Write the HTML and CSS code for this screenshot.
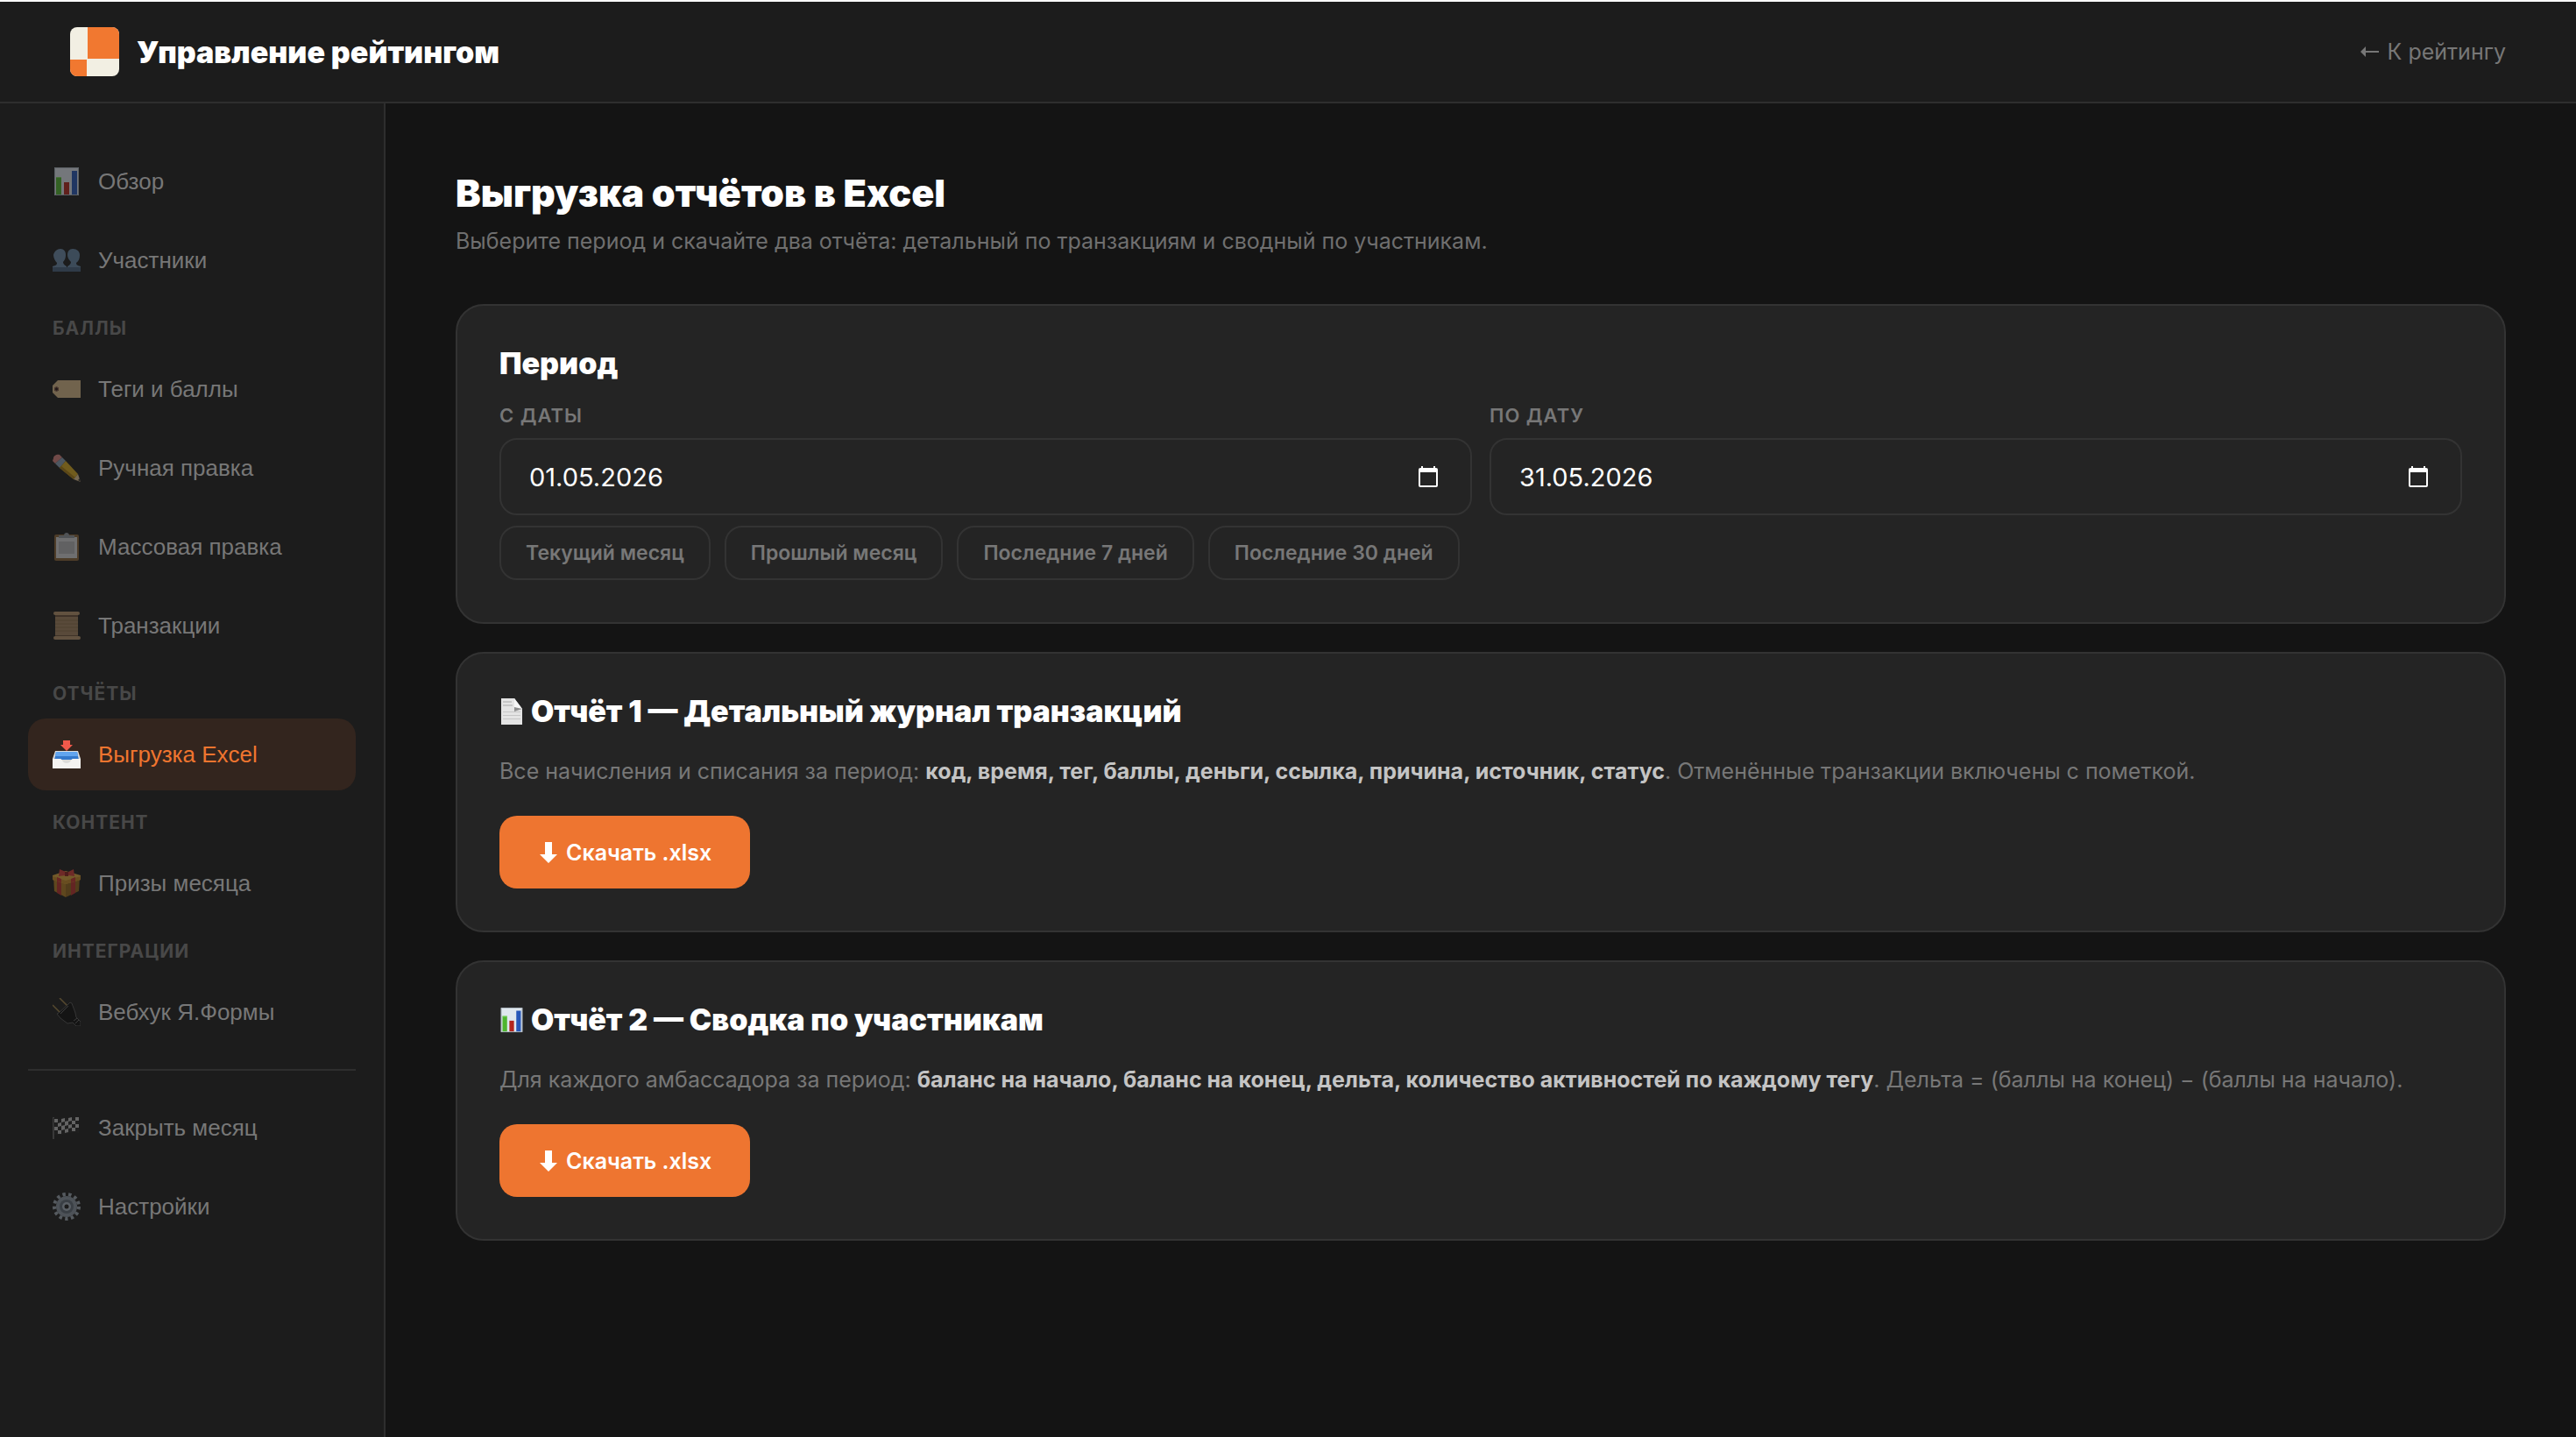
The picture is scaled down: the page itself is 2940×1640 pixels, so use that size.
FILE: index.html
```html
<!DOCTYPE html>
<html lang="ru">
<head>
<meta charset="utf-8">
<meta name="viewport" content="width=device-width, initial-scale=1">
<title>Управление рейтингом</title>
<link rel="stylesheet" href="styles.css">
</head>
<body>
<svg class="sprite" aria-hidden="true">
  <symbol id="i-chart" viewBox="0 0 32 32">
    <path fill="#dfe7ee" d="M2 0h28v32H2z"/>
    <path fill="none" stroke="#a9b4bd" d="M2.500.5h27v31h-27z"/>
    <path fill="#4fb52f" d="M4 11h6v20H4z"/>
    <path fill="#b3251d" d="M13 17h6v14h-6z"/>
    <path fill="#2757b8" d="M22 4h6v27h-6z"/>
    <path fill="#7ed860" d="M4 11h6v1H4z"/>
  </symbol>
  <symbol id="i-down" viewBox="0 0 20 24">
    <path fill="currentColor" d="M6 0h8v14h6L10 24 0 14h6z"/>
  </symbol>
  <symbol id="i-calendar" viewBox="0 0 22 24">
    <path fill="currentColor" fill-rule="evenodd" d="M3 0h2v2h12V0h2v2h1a2 2 0 0 1 2 2v18a2 2 0 0 1-2 2H2a2 2 0 0 1-2-2V4a2 2 0 0 1 2-2h1zM2 7v15h18V7z"/>
  </symbol>
</svg>

<header class="topbar">
  <div class="brand">
    <svg class="brand-logo" viewBox="0 0 56 56" aria-hidden="true">
      <clipPath id="logo-clip"><rect width="56" height="56" rx="8"/></clipPath>
      <g clip-path="url(#logo-clip)">
        <path fill="#f2efe3" d="M0 0h56v56H0z"/>
        <path fill="#f17830" d="M20 0h36v36H20zM0 37h19v19H0z"/>
      </g>
    </svg>
    <span class="brand-name">Управление рейтингом</span>
  </div>
  <a class="back-link" href="#rating"><svg class="back-arrow" viewBox="0 0 21 14" aria-hidden="true"><path fill="currentColor" d="M0 7l6-6v5h15v2H6v5z"/></svg>К рейтингу</a>
</header>

<div class="layout">
  <nav class="sidebar" aria-label="Разделы">
    <a class="nav-item" href="#overview"><svg class="nav-icon"><use href="#i-chart"/></svg>Обзор</a>
    <a class="nav-item" href="#members"><svg class="nav-icon" viewBox="0 0 32 32"><path fill="#6b8aa8" d="M9 3c4 0 6 3 6 7 0 3-1 6-3 8 0 2 1 3 4 5v5H0v-5c4-1 5-2 5-4-2-2-4-6-4-9 1-4 4-7 8-7z"/><path fill="#6485a4" d="M23 3c5 0 8 3 8 7s-1 7-4 9c0 2 1 3 5 4v5H17v-5c3-2 4-3 4-5-2-2-4-5-4-8 0-4 2-7 6-7z"/><path fill="#48627e" d="M0 24h32v5H0z"/></svg>Участники</a>

    <p class="nav-label">Баллы</p>
    <a class="nav-item" href="#tags"><svg class="nav-icon" viewBox="0 0 32 32"><path fill="#d9b98a" d="M6 6h26v20H6l-6-6v-8z"/><circle cx="4.500" cy="16" r="2.500" fill="#271713"/><circle cx="4.500" cy="16" r="2" fill="none" stroke="#8b5a4a"/></svg>Теги и баллы</a>
    <a class="nav-item" href="#manual"><svg class="nav-icon" viewBox="0 0 32 32"><path fill="#d9837f" d="M1 5c0-3 4-5 7-4l3 3-8 7-3-3z"/><path fill="#8a9fb5" d="M3 11l8-7 4 4-7 8z"/><path fill="#d8aa1f" d="M8 16l7-8 14 15-5 6z"/><path fill="#a87c12" d="M8 16l2-2 16 13-2 2z"/><path fill="#e3c594" d="M24 29l5-6 3 9z"/><path fill="#333" d="M29 30l2-2 1 4z"/></svg>Ручная правка</a>
    <a class="nav-item" href="#bulk"><svg class="nav-icon" viewBox="0 0 32 32"><rect x="2" y="2" width="28" height="30" rx="2" fill="#8a6337"/><path fill="#d4d4d6" d="M4 5h24v24H4z"/><path fill="#b5b5b7" d="M7 10h18v14H7z"/><path fill="#8f969d" d="M7 3h6c0-4 6-4 6 0h6v3H7z"/></svg>Массовая правка</a>
    <a class="nav-item" href="#transactions"><svg class="nav-icon" viewBox="0 0 32 32"><path fill="#a3835f" d="M3 4h26v25H3z"/><path stroke="#8d6e4d" d="M3 10h26M3 14h26M3 18h26M3 22h26"/><rect x="1" y="0" width="30" height="4" rx="2" fill="#b8946c"/><path fill="#6a5037" d="M3 4h26v2H3z"/><rect x="1" y="28" width="31" height="4" rx="2" fill="#b8946c"/><path fill="#6a5037" d="M3 27h26v1H3z"/></svg>Транзакции</a>

    <p class="nav-label">Отчёты</p>
    <a class="nav-item nav-item-active" href="#export" aria-current="page"><svg class="nav-icon" viewBox="0 0 32 32"><path fill="#f0594b" d="M12 0h8v5h3l-7 7-7-7h3z"/><path fill="#dcdcda" d="M3 12h26l3 9v11H0V21z"/><path fill="#3579cc" d="M4 13h24l2 9H2z"/><path fill="#62a5ef" d="M4 13h24l1 5H3z"/><path fill="#f4f3f1" d="M0 21h9c2 0 2 5 7 5s5-5 7-5h9v11H0z"/></svg>Выгрузка Excel</a>

    <p class="nav-label">Контент</p>
    <a class="nav-item" href="#prizes"><svg class="nav-icon" viewBox="0 0 32 32"><path fill="#b27d22" d="M1 8l14 5v19L2 25z"/><path fill="#94661a" d="M15 13l16-5-1 17-15 7z"/><path fill="#b9302c" d="M5 10l5 2v18l-5-3zM21 12l5-2v17l-5 3z"/><path fill="#dda53c" d="M0 7l15-5 17 5v5l-17 5L0 12z"/><path fill="#c48a25" d="M0 8l15 5 17-5v4l-17 5L0 12z"/><path fill="#c8332f" d="M5 9l5 2v4l-5-1zM21 11l5-2v5l-5 1z"/><path fill="#d13b36" d="M7 8l1-8 7 3h3l6-3 1 8-7-1h-3z"/><path fill="#8e1f1c" d="M14 3h4v5h-4z"/></svg>Призы месяца</a>

    <p class="nav-label">Интеграции</p>
    <a class="nav-item" href="#webhook"><svg class="nav-icon" viewBox="0 0 32 32"><path stroke="#9c8047" stroke-width="1.500" d="M0 8l9 9M8 0l9 9"/><path fill="#0b0b0b" stroke="#555" d="M5 18l2-1L18 7l2-2 2 1 4 11 1 5 5 5v5h-5l-4-4-6 1-8-6z"/><path stroke="#666" d="M9 18l9-9M24 26l4-3M26 29l4-4"/></svg>Вебхук Я.Формы</a>

    <hr class="nav-divider">
    <a class="nav-item" href="#close"><svg class="nav-icon" viewBox="0 0 32 32"><path stroke="#777" stroke-width="1.500" d="M1 4v25"/><path fill="#242424" d="M1 5c10 3 18-3 29 0v17c-10-3-16 4-28 2z"/><path fill="#bdbdbd" d="M2 6h4v4H2zM10 6l4-1v4l-4 1zM18 5l4-1v4l-4 1zM26 4h4v4h-4zM6 11l4-1v4l-4 1zM14 9l4-1v5l-4 1zM22 8h4v4h-4zM2 15h4v4H2zM10 14l4-1v5l-4 1zM18 13l4-1v4l-4 1zM26 12h4v4h-4zM6 19h4v4H6zM14 18l4-1v4l-4 1zM22 16h4v4h-4z"/></svg>Закрыть месяц</a>
    <a class="nav-item" href="#settings"><svg class="nav-icon" viewBox="0 0 32 32"><circle cx="16" cy="16" r="14" fill="none" stroke="#9aa5b0" stroke-width="4" stroke-dasharray="3.400 3.367"/><circle cx="16" cy="16" r="12" fill="#8995a1"/><circle cx="16" cy="16" r="8" fill="#5f6b77"/><circle cx="16" cy="16" r="5" fill="#a8b4c0"/><circle cx="16" cy="16" r="2.500" fill="#1c1c1c"/></svg>Настройки</a>
  </nav>

  <main class="content">
    <h1 class="page-title">Выгрузка отчётов в Excel</h1>
    <p class="page-subtitle">Выберите период и скачайте два отчёта: детальный по транзакциям и сводный по участникам.</p>

    <div class="cards">
      <section class="card">
        <h2 class="card-title">Период</h2>
        <div class="date-grid">
          <div class="field">
            <label class="field-label" for="date-from">С даты</label>
            <div class="date-box">
              <input class="date-input" id="date-from" type="text" inputmode="numeric" value="01.05.2026">
              <button class="date-button" type="button" aria-label="Открыть календарь"><svg class="date-icon"><use href="#i-calendar"/></svg></button>
            </div>
          </div>
          <div class="field">
            <label class="field-label" for="date-to">По дату</label>
            <div class="date-box">
              <input class="date-input" id="date-to" type="text" inputmode="numeric" value="31.05.2026">
              <button class="date-button" type="button" aria-label="Открыть календарь"><svg class="date-icon"><use href="#i-calendar"/></svg></button>
            </div>
          </div>
        </div>
        <div class="chips">
          <button class="chip" type="button">Текущий месяц</button>
          <button class="chip" type="button">Прошлый месяц</button>
          <button class="chip" type="button">Последние 7 дней</button>
          <button class="chip" type="button">Последние 30 дней</button>
        </div>
      </section>

      <section class="card">
        <h2 class="card-title"><svg class="title-icon" viewBox="0 0 28 32" aria-hidden="true"><path fill="#e4e4e4" d="M2 1h15l9 12v18H2z"/><path fill="#c6c6c6" d="M4 4h10v2H4zM4 8h11v2H4zM4 16h20v1H4zM4 20h20v1H4zM4 24h20v1H4z"/><path fill="#8e8e8e" d="M17 1l9 12-9 3z"/><path fill="#f6f6f6" d="M17 1l9 12-9-2z"/></svg>Отчёт 1 — Детальный журнал транзакций</h2>
        <p class="card-text">Все начисления и списания за период: <strong class="card-strong">код, время, тег, баллы, деньги, ссылка, причина, источник, статус</strong>. Отменённые транзакции включены с пометкой.</p>
        <button class="download" type="button"><svg class="download-icon" aria-hidden="true"><use href="#i-down"/></svg>Скачать .xlsx</button>
      </section>

      <section class="card">
        <h2 class="card-title"><svg class="title-icon" aria-hidden="true"><use href="#i-chart"/></svg>Отчёт 2 — Сводка по участникам</h2>
        <p class="card-text">Для каждого амбассадора за период: <strong class="card-strong">баланс на начало, баланс на конец, дельта, количество активностей по каждому тегу</strong>. Дельта = (баллы на конец) − (баллы на начало).</p>
        <button class="download" type="button"><svg class="download-icon" aria-hidden="true"><use href="#i-down"/></svg>Скачать .xlsx</button>
      </section>
    </div>
  </main>
</div>
</body>
</html>
```
FILE: styles.css
```css
* {
  box-sizing: border-box;
}

body {
  margin: 0;
  min-height: 100vh;
  display: flex;
  flex-direction: column;
  border-top: 2px solid #fff;
  background: #141414;
  color: #fff;
  font-family: Inter, "Liberation Sans", sans-serif;
  font-size: 25px;
}

.sprite {
  position: absolute;
  width: 0;
  height: 0;
}

h1,
h2,
p {
  margin: 0;
}

button,
input {
  font: inherit;
  color: inherit;
}

/* Header */
.topbar {
  display: flex;
  align-items: center;
  justify-content: space-between;
  height: 116px;
  padding: 0 80px;
  background: #1c1c1c;
  border-bottom: 2px solid #2e2e2e;
}

.brand {
  display: flex;
  align-items: center;
  gap: 20px;
}

.brand-logo {
  width: 56px;
  height: 56px;
}

.brand-name {
  font-size: 34px;
  font-weight: 900;
}

.back-link {
  display: flex;
  align-items: center;
  gap: 10px;
  color: #777;
  text-decoration: none;
}

.back-arrow {
  width: 21px;
  height: 14px;
}

/* Layout */
.layout {
  flex: 1;
  display: flex;
}

.sidebar {
  flex: 0 0 440px;
  display: flex;
  flex-direction: column;
  gap: 8px;
  padding: 48px 32px;
  background: #1c1c1c;
  border-right: 2px solid #2e2e2e;
}

.nav-item {
  display: flex;
  align-items: center;
  gap: 20px;
  height: 82px;
  padding: 0 28px;
  border-radius: 20px;
  color: #777;
  font-family: "Liberation Sans", Arial, sans-serif;
  font-size: 26px;
  text-decoration: none;
}

.nav-icon {
  flex: none;
  width: 32px;
  height: 32px;
  opacity: 0.45;
}

.nav-item-active {
  background: #33251e;
  color: #f0752f;
}

.nav-item-active .nav-icon {
  opacity: 1;
}

.nav-label {
  padding: 16px 28px 8px;
  color: #484848;
  font-size: 21px;
  font-weight: 700;
  line-height: 25px;
  letter-spacing: 1px;
  text-transform: uppercase;
}

.nav-divider {
  width: 100%;
  height: 2px;
  margin: 16px 0;
  border: 0;
  background: #2e2e2e;
}

.content {
  flex: 1;
  min-width: 0;
  padding: 80px;
}

.page-title {
  font-size: 43px;
  font-weight: 900;
  line-height: 44px;
}

.page-subtitle {
  margin: 13px 0 51px;
  color: #6f6f6f;
  line-height: 41px;
}

/* Cards */
.cards {
  display: flex;
  flex-direction: column;
  gap: 32px;
}

.card {
  padding: 48px;
  background: #242424;
  border: 2px solid #333;
  border-radius: 32px;
}

.card-title {
  display: flex;
  align-items: center;
  gap: 8px;
  margin-bottom: 28px;
  font-size: 34px;
  font-weight: 900;
  line-height: 35px;
}

.title-icon {
  width: 28px;
  height: 32px;
}

.card-text {
  margin-bottom: 28px;
  color: #777;
  line-height: 46px;
}

.card-strong {
  color: #c4c4c4;
  font-weight: 700;
}

.date-grid {
  display: grid;
  grid-template-columns: 1fr 1fr;
  gap: 20px;
}

.field {
  display: flex;
  flex-direction: column;
  gap: 12px;
}

.field-label {
  color: #777;
  font-size: 22px;
  font-weight: 600;
  line-height: 28px;
  letter-spacing: 1px;
  text-transform: uppercase;
}

.date-box {
  display: flex;
  align-items: center;
  height: 88px;
  padding: 0 37px 0 32px;
  border: 2px solid #333;
  border-radius: 20px;
}

.date-input {
  flex: 1;
  min-width: 0;
  padding: 0;
  border: 0;
  background: none;
  font-size: 29px;
}

.date-button {
  display: flex;
  padding: 0;
  border: 0;
  background: none;
}

.date-icon {
  width: 22px;
  height: 24px;
}

.chips {
  display: flex;
  flex-wrap: wrap;
  gap: 16px;
  margin-top: 12px;
}

.chip {
  height: 62px;
  padding: 0 28px;
  border: 2px solid #333;
  border-radius: 20px;
  background: none;
  color: #777;
  font-size: 23px;
  font-weight: 600;
}

.download {
  display: flex;
  align-items: center;
  gap: 10px;
  height: 83px;
  padding: 0 44px 0 46px;
  border: 0;
  border-radius: 20px;
  background: #ee7530;
  font-weight: 600;
}

.download-icon {
  width: 20px;
  height: 24px;
}
```
